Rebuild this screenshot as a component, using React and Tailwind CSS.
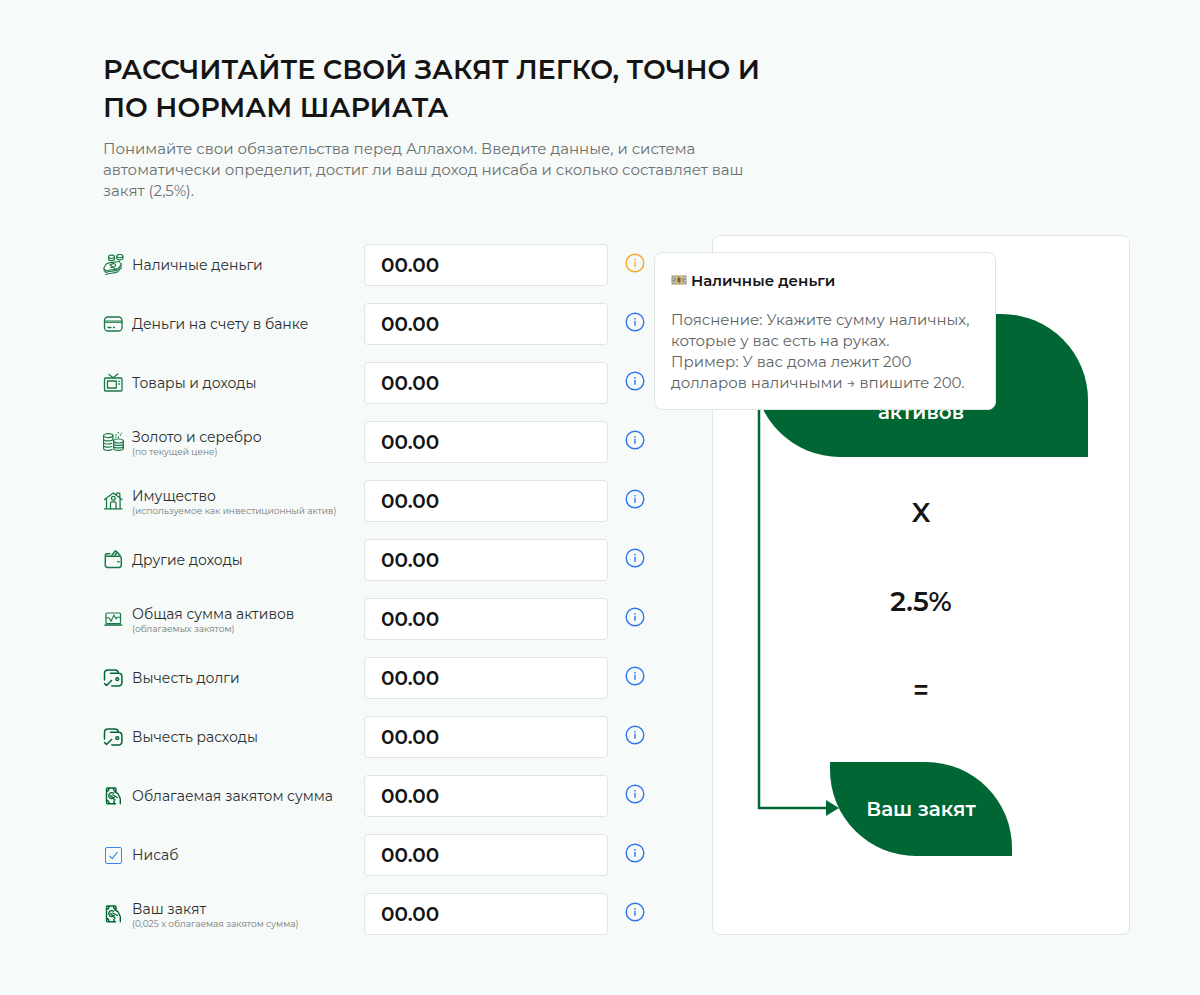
import React, { useState } from "react";

function Icon({ children, className = "text-[#1b7a45]" }) {
  return (
    <svg
      className={`w-[22px] h-[22px] shrink-0 ${className}`}
      viewBox="0 0 22 22"
      fill="none"
      stroke="currentColor"
      strokeWidth="1.3"
      strokeLinecap="round"
      strokeLinejoin="round"
      aria-hidden="true"
    >
      {children}
    </svg>
  );
}

const CashIcon = () => (
  <Icon>
    <g strokeWidth="1.1">
      <ellipse cx="8.500" cy="2.800" rx="3" ry="1.700" />
      <path d="M5.500 3v2c0 1 1.300 1.700 3 1.700s3-.7 3-1.700V3" />
      <ellipse cx="16.800" cy="2.100" rx="3.100" ry="1.700" />
      <path d="M13.700 2.300v2c0 1 1.400 1.600 3.100 1.600s3.100-.6 3.100-1.600v-2" />
      <path d="M.6 14.300c1.600-1.200 1.200-3.500 3-4.600C6.800 7.600 12 9.200 16.200 7.200c.2 1.700 1.600 2 2.500 2.900-2 1-1.500 3-3.300 4.200-3.200 2-8.200 1-12.400 2.800-.3-1.400-1.700-1.600-2.400-2.800z" />
      <path d="M6.800 10.500l5 4.200M8.300 10.200c1.900-1.200 4.600-.4 4.300 1.300s-3.400 2.200-4.700 1.800" />
      <path d="M1 16.300l1.700 2.200c4-1.800 8.800-.8 12-2.800 1.800-1.200 2-3 3.800-3.800M2.700 20.500c4-1.800 8.800-.8 12-2.800 1.800-1.200 2-3 3.800-3.800" />
    </g>
  </Icon>
);

const CardIcon = () => (
  <Icon>
    <rect x="1.500" y="4" width="17.500" height="14" rx="3.500" />
    <path d="M1.500 8h17.500M1.500 9.400h17.500" strokeWidth="1" />
    <path d="M5 14.500h3M10.500 14.500h1" />
  </Icon>
);

const TvIcon = () => (
  <Icon>
    <rect x="1.500" y="6" width="17.500" height="13" rx="1" />
    <rect x="4.500" y="9" width="8.800" height="7" />
    <path d="M10.200 5.800L6 2.500M10.200 5.800l4.500-3.900M15.800 9.300h.8M15.800 12h.8" />
  </Icon>
);

const CoinsIcon = () => (
  <Icon>
    <g strokeWidth="1.200">
      <ellipse cx="5.200" cy="4.600" rx="4.700" ry="2" />
      <path d="M.5 4.600v12.600c0 1.300 2 2.100 4.500 2.100 1.500 0 3-.2 4-.8M9.900 4.600v4.500M.5 7.700c0 1.200 2 2.100 4.700 2.100s4.700-.9 4.700-2.100M.5 10.900c0 1.200 2 2.100 4.700 2.100 1.500 0 2.500-.2 3.500-.6M.5 14c0 1.200 2 2.100 4.700 2.100 1.500 0 2.500-.2 3.500-.6" />
      <ellipse cx="15.500" cy="10" rx="4.900" ry="2" />
      <path d="M10.600 10v7.200c0 1.300 2.200 2.100 4.900 2.100s4.900-.8 4.900-2.100V10M10.600 12.400c0 1.200 2.200 2 4.900 2s4.900-.8 4.900-2M10.600 14.900c0 1.200 2.200 2 4.900 2s4.900-.8 4.900-2" />
      <path d="M15.300 1.300v.7M15.300 5.800v.7M13 3.900h.5M17.300 3.900h.5M18.500 2h.1M12.800 6.400h.1" />
    </g>
  </Icon>
);

const HouseIcon = () => (
  <Icon>
    <path d="M1.500 9.500l8.800-6.500 8.700 6.500M3.500 8.500v10.200M17.100 8.500v10.200M1.500 18.900h17.500M13.500 4.800V3.200h3.300v4.300" />
    <circle cx="10.300" cy="8.300" r="1.900" />
    <path d="M7.500 18.800v-5.500c0-1 .5-1.500 1.500-1.500h2.500c1 0 1.500.5 1.500 1.500v5.500" />
  </Icon>
);

const PurseIcon = () => (
  <Icon>
    <g strokeWidth="1.500">
      <path d="M2.300 7.500V16c0 1.500.9 2.400 2.400 2.400h11.200c1.500 0 2.400-.9 2.400-2.400V9.600c0-1.500-.9-2.400-2.400-2.400H3.800C2.800 7.200 2.300 6.700 2.300 6s.6-1.300 1.500-1.300h3" />
      <path d="M8.500 6.800l4-5 1.800 1.500-2.300 3M14.500 3.500l2.700 3M14.800 12.800h1.200" />
    </g>
  </Icon>
);

const LaptopIcon = () => (
  <Icon>
    <rect x="3" y="5" width="14.500" height="10.500" rx="1" strokeWidth="1.200" />
    <path d="M1.500 17.300h17.500M2.300 16.300h16" strokeWidth="1" />
    <path d="M3 9.700h3l2 3.500L11 7l2 3.800 1.500-1.600h3" strokeWidth="1.100" />
  </Icon>
);

const WalletIcon = () => (
  <Icon className="text-[#006633]">
    <g strokeWidth="1.500">
      <path d="M1.500 13V6.500c0-2.200 1.200-3.500 3.500-3.500h7c1.800 0 3 .9 3.300 2.700M7.500 6.300h8c2.200 0 3.400 1.200 3.400 3.300v6c0 2.200-1.200 3.400-3.400 3.400H8.800" />
      <path d="M1.500 16.500l2 2 5-5" />
      <circle cx="14.300" cy="12.200" r="1.400" />
    </g>
  </Icon>
);

const PayIcon = () => (
  <Icon className="text-[#006633]">
    <g strokeWidth="1.400">
      <path d="M12.500 18.800H4.500c-.7 0-1-.4-1-1V4c0-.7.400-1 1-1H12c.6 0 1 .4 1 1v3M3.500 6.500C5.300 6.300 6 5 6 3M10.500 3c0 2 .8 3.300 2.500 3.500M3.500 15.300c1.800.2 2.500 1.300 2.500 3.300" />
      <path d="M10.500 8.200a3 3 0 1 0 .6 4.200M7.500 10.500l4.500 4.500c-1.500 1-1.500 2.300-.3 3.600" />
      <path d="M9.800 10l4.500 2.500M12 7.200l3 1.500 2.300 5v5" />
    </g>
  </Icon>
);

function NisabCheck() {
  return (
    <span className="grid w-[20px] h-[22px] mr-0.5 shrink-0 place-items-center">
      <input
        type="checkbox"
        defaultChecked
        aria-label="Нисаб достигнут"
        className="peer col-start-1 row-start-1 w-[17px] h-[17px] appearance-none rounded-[2px] border border-[#3b82f6]"
      />
      <svg
        className="col-start-1 row-start-1 hidden w-[11px] h-[11px] pointer-events-none peer-checked:block"
        viewBox="0 0 11 11"
        fill="none"
        stroke="#3b82f6"
        strokeWidth="1.200"
      >
        <path d="M1.500 5.800l2.700 2.900L9.500 2" />
      </svg>
    </span>
  );
}

const fields = [
  { id: "cash", label: "Наличные деньги", icon: <CashIcon /> },
  { id: "bank", label: "Деньги на счету в банке", icon: <CardIcon /> },
  { id: "goods", label: "Товары и доходы", icon: <TvIcon /> },
  {
    id: "gold",
    label: "Золото и серебро",
    note: "(по текущей цене)",
    icon: <CoinsIcon />,
  },
  {
    id: "property",
    label: "Имущество",
    note: "(используемое как инвестиционный актив)",
    icon: <HouseIcon />,
  },
  { id: "other", label: "Другие доходы", icon: <PurseIcon /> },
  {
    id: "total",
    label: "Общая сумма активов",
    note: "(облагаемых закятом)",
    icon: <LaptopIcon />,
  },
  { id: "debts", label: "Вычесть долги", icon: <WalletIcon /> },
  { id: "expenses", label: "Вычесть расходы", icon: <WalletIcon /> },
  { id: "taxable", label: "Облагаемая закятом сумма", icon: <PayIcon /> },
  { id: "nisab", label: "Нисаб", icon: <NisabCheck /> },
  {
    id: "zakat",
    label: "Ваш закят",
    note: "(0,025 x облагаемая закятом сумма)",
    icon: <PayIcon />,
  },
];

function InfoButton({ label, active, onClick }) {
  return (
    <button
      type="button"
      aria-label={`Пояснение: ${label}`}
      onClick={onClick}
      className={`block cursor-pointer ${
        active ? "text-[#f5a623]" : "text-[#2f74f0]"
      }`}
    >
      <svg
        className="w-5 h-5"
        viewBox="0 0 20 20"
        fill="none"
        stroke="currentColor"
        strokeWidth="1.400"
      >
        <circle cx="10" cy="10" r="8.800" />
        <path d="M10 8.700v5M10 6v1.500" />
      </svg>
    </button>
  );
}

function Tooltip() {
  return (
    <div
      role="tooltip"
      className="absolute left-full -top-[1px] z-10 ml-[9px] w-[342px] rounded-lg border border-[#e1e6e5] bg-white px-4 pt-[17px] pb-4 text-[15px]"
    >
      <p className="flex items-center gap-1 font-semibold leading-[22px] text-[#141414]">
        <svg className="w-4 h-4" viewBox="0 0 16 16" aria-hidden="true">
          <path d="M.5 2.500h15v9H.5z" fill="#8a9390" />
          <path
            d="M2 4h12v6H2z"
            fill="none"
            stroke="#dfe4e2"
            strokeDasharray="2 1"
          />
          <circle cx="8" cy="7" r="2.500" fill="#5c6663" />
          <path d="M4.500 2h2v10h-2zM9.500 2h2v10h-2z" fill="#f5b547" />
        </svg>
        Наличные деньги
      </p>
      <p className="mt-[17px] leading-[21px] text-[#606463]">
        Пояснение: Укажите сумму наличных, которые у вас есть на руках.
        <br />
        Пример: У вас дома лежит 200
        <br />
        долларов наличными → впишите 200.
      </p>
    </div>
  );
}

function FieldRow({ field, open, onToggle }) {
  const [value, setValue] = useState("00.00");

  return (
    <div className="flex items-center">
      <div className="flex w-[261px] shrink-0 items-center gap-[7px]">
        {field.icon}
        <label htmlFor={field.id} className="text-sm leading-5 text-[#2b2e2d]">
          {field.label}
          {field.note && (
            <span className="block text-[9px] leading-[10px] text-[#737776]">
              {field.note}
            </span>
          )}
        </label>
      </div>
      <input
        id={field.id}
        type="text"
        inputMode="decimal"
        value={value}
        onChange={(e) => setValue(e.target.value)}
        className="h-[42px] min-w-0 flex-1 rounded-[4px] border border-[#dfe5e4] bg-white px-4 text-xl font-semibold text-[#141414] outline-none"
      />
      <div className="relative mb-1 ml-[17px]">
        <InfoButton label={field.label} active={open} onClick={onToggle} />
        {open && <Tooltip />}
      </div>
    </div>
  );
}

function Leaf({ className, children }) {
  return (
    <div
      className={`flex items-center justify-center rounded-tr-[86px] rounded-bl-[86px] bg-[#006633] text-center text-xl leading-[26px] font-semibold text-white ${className}`}
    >
      {children}
    </div>
  );
}

function Formula() {
  return (
    <section className="flex min-w-0 flex-col items-center rounded-lg border border-[#e1e6e5] bg-white py-[78px]">
      <div className="relative flex w-[334px] flex-col items-center">
        <Leaf className="h-[143px] w-full">
          Общая
          <br />
          сумма
          <br />
          активов
        </Leaf>
        <div className="mt-[38px] mb-[53px] flex flex-col items-center gap-[53px] text-[27px] leading-9 font-semibold text-[#141414]">
          <span>X</span>
          <span>2.5%</span>
          <span>=</span>
        </div>
        <Leaf className="h-[94px] w-[182px]">Ваш закят</Leaf>
        {/* connector from the assets leaf to the result */}
        <svg
          className="absolute left-0 top-[72px] h-[432px] w-[86px]"
          viewBox="0 0 86 432"
          fill="none"
        >
          <path d="M5 0v422h68" stroke="#006633" strokeWidth="2.500" />
          <path d="M72 414l13 8-13 8z" fill="#006633" />
        </svg>
      </div>
    </section>
  );
}

export default function App() {
  const [openId, setOpenId] = useState("cash");

  return (
    <main className="min-h-screen bg-[#f6faf9] pt-[51px] pr-[70px] pb-[60px] pl-[103px] font-[Montserrat,Inter,'Liberation_Sans',sans-serif]">
      <h1 className="text-[27px] leading-[38px] font-semibold text-[#141414]">
        РАССЧИТАЙТЕ СВОЙ ЗАКЯТ ЛЕГКО, ТОЧНО И
        <br />
        ПО НОРМАМ ШАРИАТА
      </h1>
      <p className="mt-[11px] text-[15px] leading-[21px] text-[#6b6f6e]">
        Понимайте свои обязательства перед Аллахом. Введите данные, и система
        <br />
        автоматически определит, достиг ли ваш доход нисаба и сколько составляет
        ваш
        <br />
        закят (2,5%).
      </p>
      <div className="mt-[34px] grid grid-cols-[542fr_418fr] gap-[67px]">
        <form className="flex min-w-0 flex-col gap-[17px] pt-[9px]">
          {fields.map((field) => (
            <FieldRow
              key={field.id}
              field={field}
              open={openId === field.id}
              onToggle={() => setOpenId(openId === field.id ? null : field.id)}
            />
          ))}
        </form>
        <Formula />
      </div>
    </main>
  );
}
